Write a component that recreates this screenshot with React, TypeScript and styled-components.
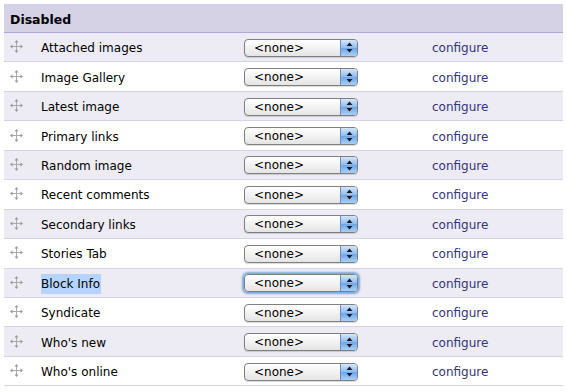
import React from 'react';
import styled, { createGlobalStyle } from 'styled-components';

const GlobalStyle = createGlobalStyle`
  html, body {
    margin: 0;
    padding: 0;
    background: #fff;
  }
  body {
    padding: 4px;
    font-family: "DejaVu Sans", Verdana, sans-serif;
  }
`;

const Table = styled.table`
  width: 559px;
  border-collapse: collapse;
  font-size: 12px;
  color: #000;
`;

const HeaderCell = styled.th`
  height: 26px;
  padding: 2px 0 0 6px;
  text-align: left;
  font-weight: bold;
  background: #d4d2e4;
  border-bottom: 1px solid #b0a6dc;
  font-size: 12.5px;
`;

const Row = styled.tr<{ $odd: boolean }>`
  height: 29.45px;
  background: ${(p) => (p.$odd ? '#edecf4' : '#ffffff')};
  border-bottom: 1px solid #d4d1e8;
`;

const HandleCell = styled.td`
  width: 31px;
  padding: 2px 0 0 6px;
  vertical-align: middle;
`;

const NameCell = styled.td`
  width: 203px;
  padding: 2px 0 0 0;
  vertical-align: middle;
`;

const SelectCell = styled.td`
  width: 188px;
  padding: 1px 0 0 0;
  vertical-align: middle;
`;

const LinkCell = styled.td`
  padding: 2px 0 0 0;
  vertical-align: middle;
`;

const Highlight = styled.span<{ $on: boolean }>`
  background: ${(p) => (p.$on ? '#b5d5ff' : 'transparent')};
  padding: 3px 1px 3px 0;
`;

const SelectBox = styled.div<{ $focus: boolean }>`
  position: relative;
  width: 112px;
  height: 16px;
  border: 1px solid #7f7f7f;
  border-radius: 4px;
  background: linear-gradient(#ffffff, #f0f0f0 60%, #e4e4e4);
  display: flex;
  align-items: center;
  box-sizing: content-box;
  font-size: 12px;
  box-shadow: ${(p) => (p.$focus ? '0 0 2px 2px #7aa8e0' : '0 1px 1px rgba(0,0,0,0.15)')};
`;

const SelectLabel = styled.span`
  flex: 1;
  padding-left: 9px;
  line-height: 16px;
`;

const Stepper = styled.div`
  width: 16px;
  height: 16px;
  border-left: 1px solid #6c8bbf;
  border-radius: 0 3px 3px 0;
  background: linear-gradient(#d4e6fb, #8dbcee 50%, #6ea6e6 51%, #a8d0f7);
  display: flex;
  align-items: center;
  justify-content: center;
`;

const Link = styled.a`
  color: #34347f;
  text-decoration: none;
  font-size: 12px;
  cursor: pointer;
`;

const DragIcon: React.FC = () => (
  <svg width="13" height="13" viewBox="0 0 13 13">
    <g stroke="#aaaaaa" strokeWidth="1" fill="none">
      <line x1="6.5" y1="1.5" x2="6.5" y2="11.5" />
      <line x1="1.5" y1="6.5" x2="11.5" y2="6.5" />
    </g>
    <g fill="#999999">
      <polygon points="6.5,0 4.5,2.5 8.5,2.5" />
      <polygon points="6.5,13 4.5,10.5 8.5,10.5" />
      <polygon points="0,6.5 2.5,4.5 2.5,8.5" />
      <polygon points="13,6.5 10.5,4.5 10.5,8.5" />
    </g>
  </svg>
);

const StepArrows: React.FC = () => (
  <svg width="7" height="11" viewBox="0 0 7 11">
    <polygon points="3.5,0.5 0.5,4 6.5,4" fill="#1a1a2a" />
    <polygon points="3.5,10.5 0.5,7 6.5,7" fill="#1a1a2a" />
  </svg>
);

const blocks = [
  'Attached images',
  'Image Gallery',
  'Latest image',
  'Primary links',
  'Random image',
  'Recent comments',
  'Secondary links',
  'Stories Tab',
  'Block Info',
  'Syndicate',
  "Who's new",
  "Who's online",
];

export default function App() {
  return (
    <>
      <GlobalStyle />
      <Table>
        <thead>
          <tr>
            <HeaderCell colSpan={4}>Disabled</HeaderCell>
          </tr>
        </thead>
        <tbody>
          {blocks.map((name, i) => {
            const active = name === 'Block Info';
            return (
              <Row key={name} $odd={i % 2 === 0}>
                <HandleCell>
                  <DragIcon />
                </HandleCell>
                <NameCell>
                  <Highlight $on={active}>{name}</Highlight>
                </NameCell>
                <SelectCell>
                  <SelectBox $focus={active}>
                    <SelectLabel>&lt;none&gt;</SelectLabel>
                    <Stepper>
                      <StepArrows />
                    </Stepper>
                  </SelectBox>
                </SelectCell>
                <LinkCell>
                  <Link>configure</Link>
                </LinkCell>
              </Row>
            );
          })}
        </tbody>
      </Table>
    </>
  );
}
